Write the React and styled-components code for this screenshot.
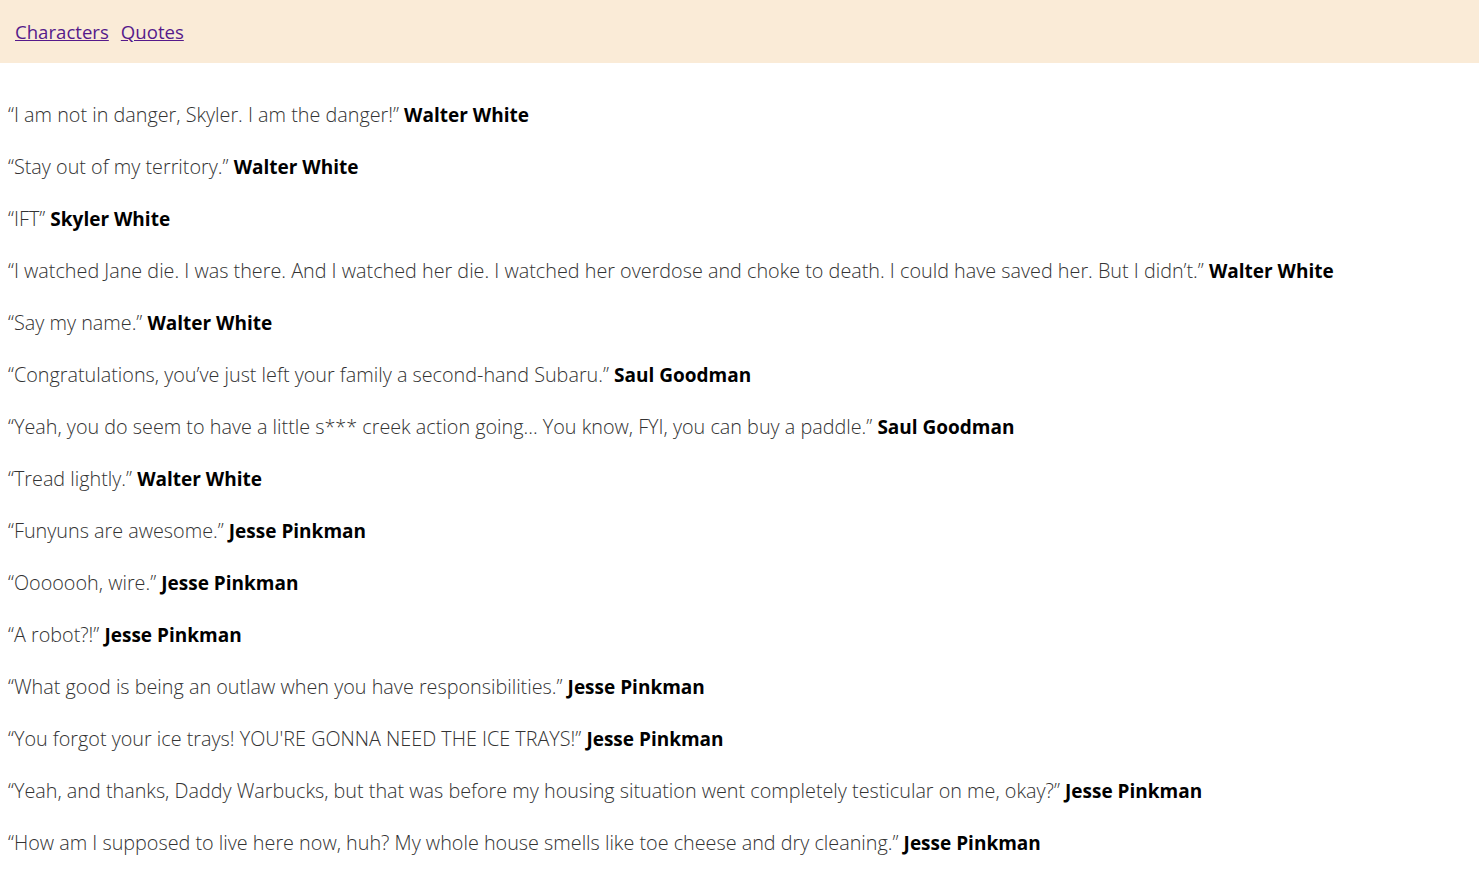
import styled, {createGlobalStyle} from 'styled-components';

const quotes = [
  {text: 'I am not in danger, Skyler. I am the danger!', author: 'Walter White'},
  {text: 'Stay out of my territory.', author: 'Walter White'},
  {text: 'IFT', author: 'Skyler White'},
  {text: 'I watched Jane die. I was there. And I watched her die. I watched her overdose and choke to death. I could have saved her. But I didn’t.', author: 'Walter White'},
  {text: 'Say my name.', author: 'Walter White'},
  {text: 'Congratulations, you’ve just left your family a second-hand Subaru.', author: 'Saul Goodman'},
  {text: 'Yeah, you do seem to have a little s*** creek action going... You know, FYI, you can buy a paddle.', author: 'Saul Goodman'},
  {text: 'Tread lightly.', author: 'Walter White'},
  {text: 'Funyuns are awesome.', author: 'Jesse Pinkman'},
  {text: 'Ooooooh, wire.', author: 'Jesse Pinkman'},
  {text: 'A robot?!', author: 'Jesse Pinkman'},
  {text: 'What good is being an outlaw when you have responsibilities.', author: 'Jesse Pinkman'},
  {text: 'You forgot your ice trays! YOU\'RE GONNA NEED THE ICE TRAYS!', author: 'Jesse Pinkman'},
  {text: 'Yeah, and thanks, Daddy Warbucks, but that was before my housing situation went completely testicular on me, okay?', author: 'Jesse Pinkman'},
  {text: 'How am I supposed to live here now, huh? My whole house smells like toe cheese and dry cleaning.', author: 'Jesse Pinkman'},
];

function App() {
  return (
    <>
      <GlobalStyle />
      <Nav>
        <NavLink href="#characters">Characters</NavLink>
        <NavLink href="#quotes">Quotes</NavLink>
      </Nav>
      <QuoteList>
        {quotes.map((q, i) => (
          <Quote key={i}>
            “{q.text}” <Author>{q.author}</Author>
          </Quote>
        ))}
      </QuoteList>
    </>
  );
}

export default App;

const GlobalStyle = createGlobalStyle`
  body{
    margin:0;
    background:#fff;
    font-family:"Open Sans", "Noto Sans", sans-serif;
  }
`;
const Nav = styled.nav`
  display:flex;
  align-items:center;
  gap:12px;
  height:63px;
  padding:0 15px;
  background:#faebd7;
`;
const NavLink = styled.a`
  color:#551a8b;
  font-size:18.6px;
  text-decoration:underline;
`;
const QuoteList = styled.div`
  display:flex;
  flex-direction:column;
  gap:24px;
  padding:38px 8px 0;
`;
const Quote = styled.div`
  font-size:19.8px;
  line-height:28px;
  color:#333;
  font-weight:300;
`;
const Author = styled.b`
  color:#000;
  font-weight:700;
  font-size:19px;
`;
